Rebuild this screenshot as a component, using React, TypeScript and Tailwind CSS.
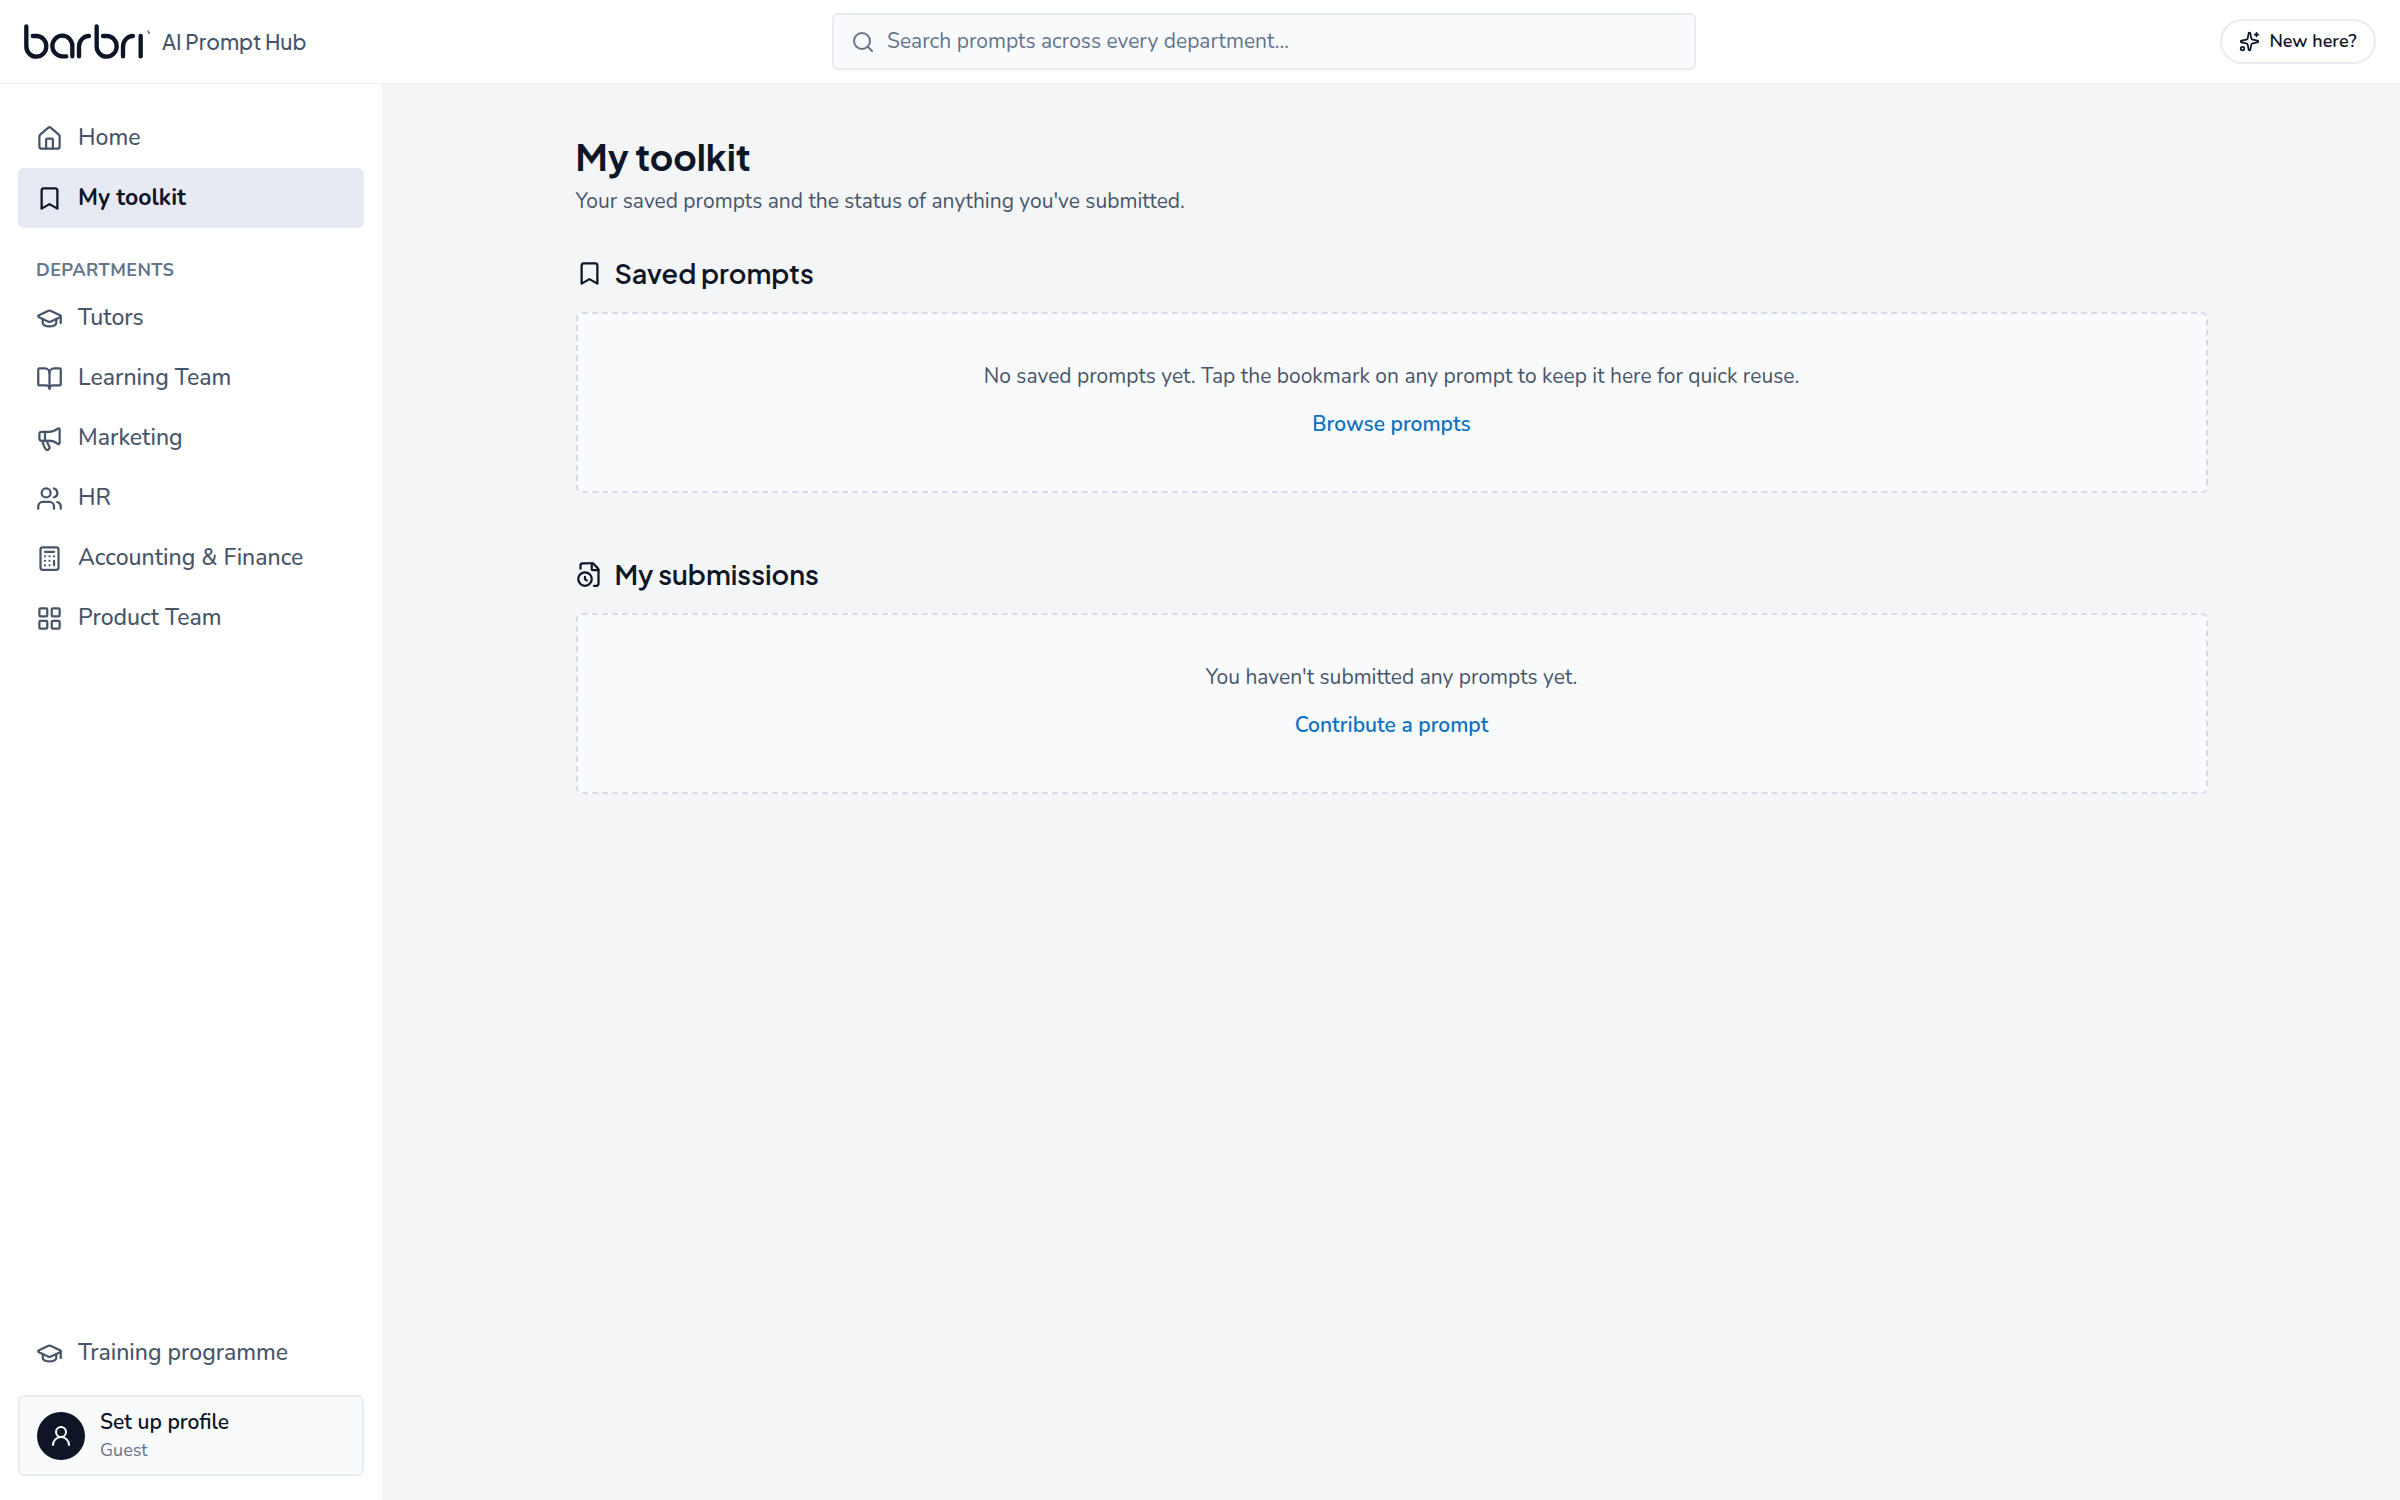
import React from 'react';
import {
  BookOpen,
  Bookmark,
  Calculator,
  FileClock,
  GraduationCap,
  House,
  LayoutGrid,
  LucideIcon,
  Megaphone,
  Search,
  Sparkles,
  UserRound,
  Users,
} from 'lucide-react';

interface NavItem {
  label: string;
  icon: LucideIcon;
  active?: boolean;
}

const mainNav: NavItem[] = [
  { label: 'Home', icon: House },
  { label: 'My toolkit', icon: Bookmark, active: true },
];

const departments: NavItem[] = [
  { label: 'Tutors', icon: GraduationCap },
  { label: 'Learning Team', icon: BookOpen },
  { label: 'Marketing', icon: Megaphone },
  { label: 'HR', icon: Users },
  { label: 'Accounting & Finance', icon: Calculator },
  { label: 'Product Team', icon: LayoutGrid },
];

const Logo = () => (
  <svg
    viewBox="72 69 381 111"
    className="h-[37px] w-[127px] shrink-0"
    fill="none"
    stroke="#0d1526"
    strokeWidth="13"
    strokeLinecap="round"
    role="img"
    aria-label="barbri"
  >
    <path d="M79 79V138A30 31 0 1 0 109 108H98" />
    <path d="M199 169H187A30 31 0 1 1 217 138V169" />
    <path d="M237 169V140A30 32 0 0 1 267 108" />
    <path d="M290 79V138A30 31 0 1 0 320 108H309" />
    <path d="M369 169V140A30 32 0 0 1 399 108" />
    <path d="M422 108V169" />
    <path d="M442 93h4M445 97h4M446 101h2" strokeWidth="2" />
  </svg>
);

const NavLink = ({ item }: { item: NavItem }) => {
  const Icon = item.icon;
  return (
    <a
      href="#"
      aria-current={item.active ? 'page' : undefined}
      className={
        item.active
          ? 'flex items-center gap-[15px] rounded-md bg-[#e7eaf2] px-[18px] py-3 text-[23px] leading-9 font-bold text-[#0d1526]'
          : 'flex items-center gap-[15px] rounded-md px-[18px] py-3 text-[23px] leading-9 font-medium text-[#475569] hover:bg-slate-50'
      }
    >
      <Icon size={27} strokeWidth={2} className="shrink-0" />
      {item.label}
    </a>
  );
};

interface EmptySectionProps {
  title: string;
  icon: LucideIcon;
  message: string;
  action: string;
}

const EmptySection = ({ title, icon: Icon, message, action }: EmptySectionProps) => (
  <section>
    <h2 className="mb-[18px] flex items-center gap-3 font-['Plus_Jakarta_Sans','Inter',sans-serif] text-[27px] leading-[42px] font-semibold text-[#0d1526]">
      <Icon size={27} strokeWidth={2} className="shrink-0" />
      {title}
    </h2>
    <div className="rounded-md border-2 border-dashed border-[#d5dce7] bg-[#f9fafc] px-6 pt-[47px] pb-[49px] text-center">
      <p className="text-[21px] leading-[31px] text-[#475569]">{message}</p>
      <a href="#" className="mt-3.5 inline-block text-[21px] leading-9 font-semibold text-[#0b72c4] hover:underline">
        {action}
      </a>
    </div>
  </section>
);

export default function App() {
  return (
    <div className="flex min-h-screen flex-col bg-[#f3f5f7] font-['Nunito','Lato',sans-serif]">
      <header className="flex h-[84px] items-center gap-6 border-b border-[#eef0f4] bg-white px-6">
        <a href="#" className="flex w-[284px] shrink-0 items-center gap-[11px]">
          <Logo />
          <span className="font-['Plus_Jakarta_Sans','Inter',sans-serif] text-[21px] font-medium whitespace-nowrap text-[#475569]">
            AI Prompt Hub
          </span>
        </a>
        <div className="flex flex-1 justify-center">
          <label className="flex h-[57px] w-full max-w-[864px] items-center gap-3 rounded-md border-2 border-[#e8ebf2] bg-[#f9fafc] px-[17px] text-[#64748b]">
            <Search size={24} strokeWidth={2} className="shrink-0" />
            <input
              type="search"
              aria-label="Search prompts"
              placeholder="Search prompts across every department..."
              className="min-w-0 flex-1 bg-transparent text-[21px] outline-none placeholder:text-[#64748b]"
            />
          </label>
        </div>
        <button
          type="button"
          className="flex h-[45px] w-[156px] shrink-0 items-center justify-center gap-[9px] rounded-full border-2 border-[#e8ebf2] text-[18px] font-semibold text-[#0d1526]"
        >
          <Sparkles size={21} strokeWidth={2} />
          New here?
        </button>
      </header>

      <div className="flex flex-1">
        <aside className="flex w-[383px] shrink-0 flex-col border-r border-[#eef0f4] bg-white px-[18px] py-6">
          <nav className="flex flex-col">
            {mainNav.map((item) => (
              <NavLink key={item.label} item={item} />
            ))}
            <h2 className="px-[18px] pt-[30px] pb-1.5 text-[18px] leading-6 font-bold tracking-wide text-[#64748b] uppercase">
              Departments
            </h2>
            {departments.map((item) => (
              <NavLink key={item.label} item={item} />
            ))}
          </nav>

          <div className="mt-auto flex flex-col gap-3">
            <NavLink item={{ label: 'Training programme', icon: GraduationCap }} />
            <button
              type="button"
              className="flex h-[81px] items-center gap-[15px] rounded-md border-2 border-[#e8ebf2] bg-[#f9fafc] px-[17px] text-left"
            >
              <span className="flex size-12 shrink-0 items-center justify-center rounded-full bg-[#0d1526] text-white">
                <UserRound size={24} strokeWidth={2} />
              </span>
              <span className="flex flex-col">
                <span className="text-[21px] leading-7 font-semibold text-[#0d1526]">Set up profile</span>
                <span className="text-[18px] leading-7 text-[#64748b]">Guest</span>
              </span>
            </button>
          </div>
        </aside>

        <main className="flex-1">
          <div className="mx-auto max-w-[1728px] px-12 py-12">
            <h1 className="font-['Plus_Jakarta_Sans','Inter',sans-serif] text-[36px] leading-[50px] font-bold text-[#0d1526]">
              My toolkit
            </h1>
            <p className="mt-1 text-[21px] leading-[30px] text-[#475569]">
              Your saved prompts and the status of anything you've submitted.
            </p>
            <div className="mt-9 flex flex-col gap-[60px]">
              <EmptySection
                title="Saved prompts"
                icon={Bookmark}
                message="No saved prompts yet. Tap the bookmark on any prompt to keep it here for quick reuse."
                action="Browse prompts"
              />
              <EmptySection
                title="My submissions"
                icon={FileClock}
                message="You haven't submitted any prompts yet."
                action="Contribute a prompt"
              />
            </div>
          </div>
        </main>
      </div>
    </div>
  );
}
